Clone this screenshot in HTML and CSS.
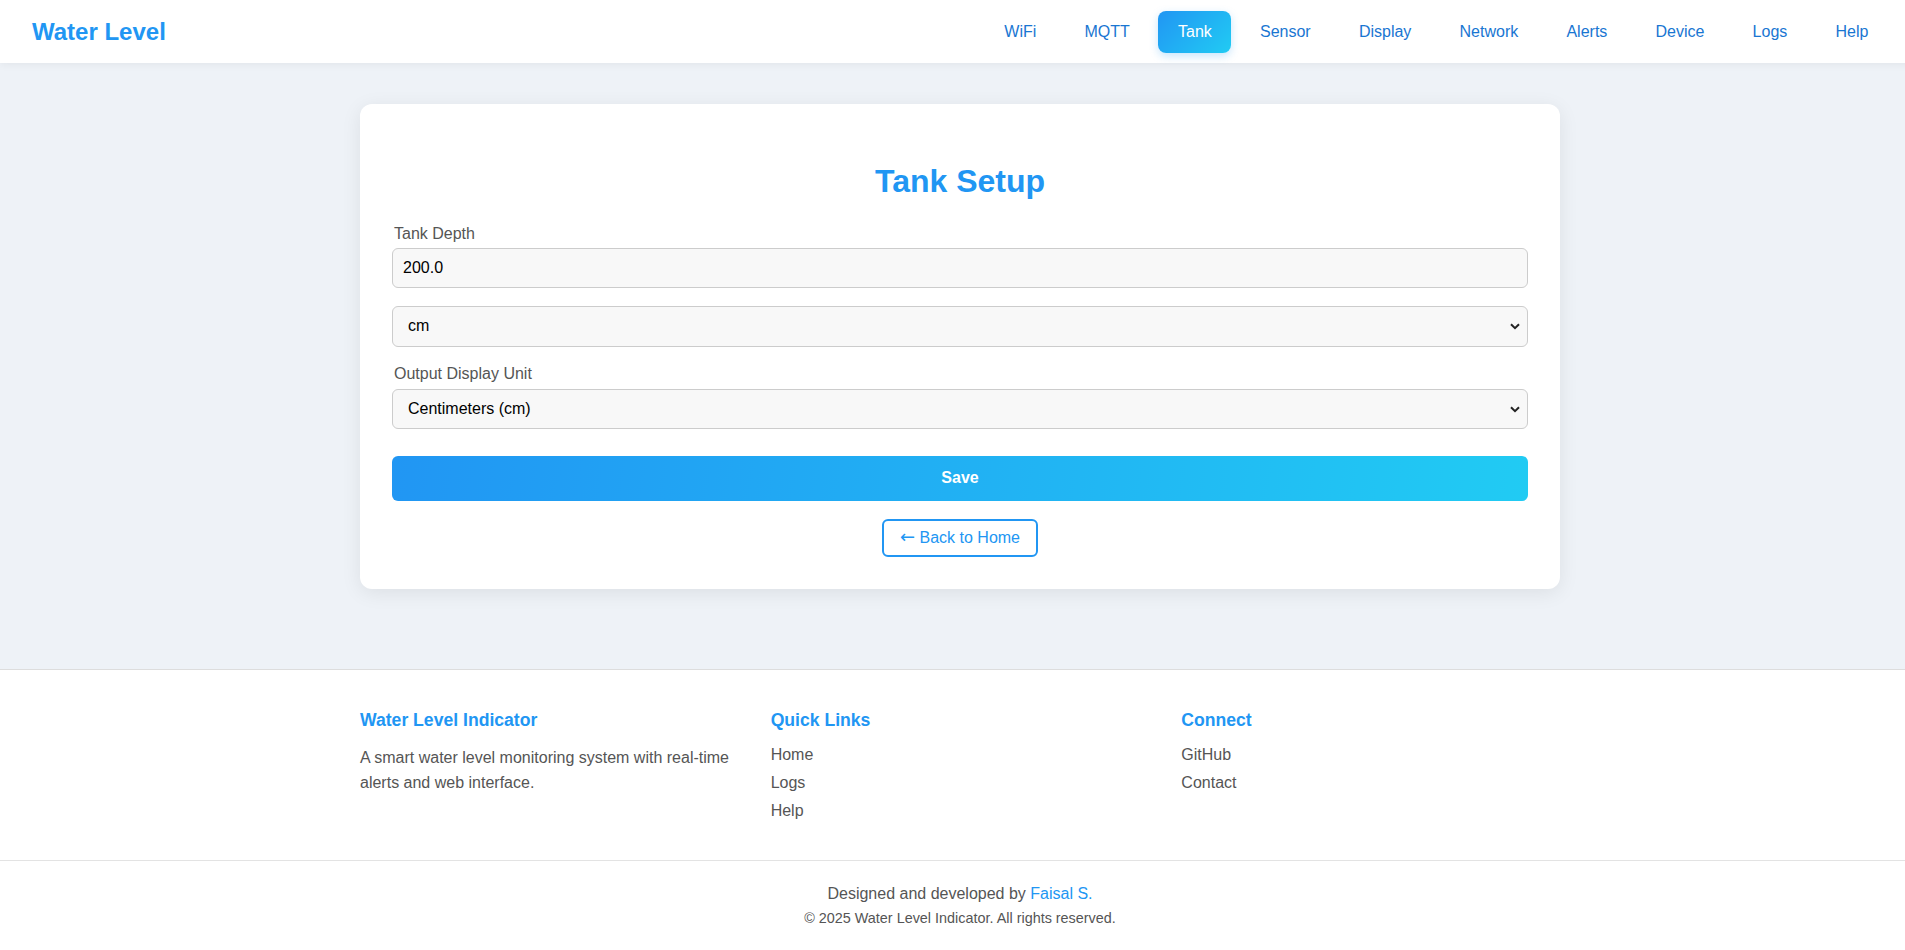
FILE: index.html
```html
<!DOCTYPE html>
<html lang="en">
<head>
<meta charset="utf-8">
<title>Tank Setup - Water Level</title>
<link rel="stylesheet" href="styles.css">
</head>
<body>
<div class="page">
  <header class="topbar">
    <a class="brand" href="#">Water Level</a>
    <nav>
      <ul class="nav">
        <li><a href="#">WiFi</a></li>
        <li><a href="#">MQTT</a></li>
        <li><a href="#" class="active">Tank</a></li>
        <li><a href="#">Sensor</a></li>
        <li><a href="#">Display</a></li>
        <li><a href="#">Network</a></li>
        <li><a href="#">Alerts</a></li>
        <li><a href="#">Device</a></li>
        <li><a href="#">Logs</a></li>
        <li><a href="#">Help</a></li>
      </ul>
    </nav>
  </header>

  <main class="main">
    <section class="card">
      <h2 class="card-title">Tank Setup</h2>
      <form class="form">
        <div class="field">
          <label class="label" for="depth">Tank Depth</label>
          <input class="control" id="depth" type="text" value="200.0">
        </div>
        <div class="field">
          <div class="select-wrap">
            <select class="control select">
              <option>cm</option>
            </select>
            <svg class="chevron" width="10" height="7" viewBox="0 0 10 7"><path d="M1 1.2 L5 5.2 L9 1.2" fill="none" stroke="#222" stroke-width="2"/></svg>
          </div>
        </div>
        <div class="field">
          <label class="label" for="unit">Output Display Unit</label>
          <div class="select-wrap">
            <select class="control select" id="unit">
              <option>Centimeters (cm)</option>
            </select>
            <svg class="chevron" width="10" height="7" viewBox="0 0 10 7"><path d="M1 1.2 L5 5.2 L9 1.2" fill="none" stroke="#222" stroke-width="2"/></svg>
          </div>
        </div>
        <button type="button" class="btn-save">Save</button>
      </form>
      <div class="back-row">
        <a class="btn-back" href="#"><span class="arrow">&larr;</span> Back to Home</a>
      </div>
    </section>
  </main>

  <footer class="footer">
    <div class="footer-grid">
      <div class="footer-col">
        <h3 class="footer-title">Water Level Indicator</h3>
        <p class="footer-text">A smart water level monitoring system with real-time alerts and web interface.</p>
      </div>
      <div class="footer-col">
        <h3 class="footer-title">Quick Links</h3>
        <ul class="footer-links">
          <li><a href="#">Home</a></li>
          <li><a href="#">Logs</a></li>
          <li><a href="#">Help</a></li>
        </ul>
      </div>
      <div class="footer-col">
        <h3 class="footer-title">Connect</h3>
        <ul class="footer-links">
          <li><a href="#">GitHub</a></li>
          <li><a href="#">Contact</a></li>
        </ul>
      </div>
    </div>
    <div class="footer-bottom">
      <p class="credit">Designed and developed by <a href="#">Faisal S.</a></p>
      <p class="copy">&copy; 2025 Water Level Indicator. All rights reserved.</p>
    </div>
  </footer>
</div>
</body>
</html>
```

FILE: styles.css
```css
* { box-sizing: border-box; }

html, body {
  margin: 0;
  padding: 0;
  overflow-x: hidden;
}

body {
  font-family: "Liberation Sans", Arial, Helvetica, sans-serif;
  background: #eef2f7;
  color: #333;
}

.page {
  width: 1920px;
}

a { text-decoration: none; }

/* Header */
.topbar {
  height: 63px;
  background: #ffffff;
  display: flex;
  align-items: center;
  justify-content: space-between;
  padding: 0 32px;
  box-shadow: 0 2px 8px rgba(0, 0, 0, 0.05);
  position: relative;
  z-index: 1;
}

.brand {
  font-size: 24px;
  font-weight: bold;
  color: #2196f3;
  line-height: 28px;
}

.nav {
  list-style: none;
  margin: 0;
  padding: 0;
  display: flex;
  gap: 9px;
}

.nav a {
  display: block;
  padding: 12px 19.6px;
  line-height: 18px;
  font-size: 16px;
  color: #1976d2;
  border-radius: 8px;
}

.nav a.active {
  background: linear-gradient(135deg, #2196f3, #21cbf3);
  color: #ffffff;
  box-shadow: 0 3px 8px rgba(33, 150, 243, 0.25);
}

/* Main */
.main {
  padding: 41px 0 80px;
}

.card {
  width: 1200px;
  margin: 0 auto;
  background: #ffffff;
  border-radius: 12px;
  padding: 32px;
  box-shadow: 0 4px 20px rgba(0, 0, 0, 0.08);
}

.card-title {
  text-align: center;
  color: #2196f3;
  font-size: 32px;
  font-weight: bold;
  line-height: 37px;
  margin: 26.5px 0 25px;
}

.form {
  display: flex;
  flex-direction: column;
}

.field {
  margin-bottom: 18px;
}

.label {
  display: block;
  font-size: 16px;
  line-height: 18px;
  color: #555;
  margin: 0 0 5px 2px;
}

.field:nth-child(3) .label {
  margin-bottom: 6px;
}

.control {
  display: block;
  width: 100%;
  height: 40px;
  padding: 10px;
  font-family: inherit;
  font-size: 16px;
  line-height: 18px;
  color: #000;
  background: #f8f8f8;
  border: 1px solid #cccccc;
  border-radius: 6px;
}

.select-wrap {
  position: relative;
}

.select {
  -webkit-appearance: none;
  appearance: none;
  height: 41px;
  padding: 10px 30px 10px 15px;
}

.field:nth-child(3) .select {
  height: 40px;
}

.chevron {
  position: absolute;
  right: 8px;
  top: 50%;
  margin-top: -3px;
  pointer-events: none;
}

.btn-save {
  margin-top: 9px;
  width: 100%;
  height: 45px;
  border: none;
  border-radius: 6px;
  background: linear-gradient(100deg, #2196f3, #21cbf3);
  color: #ffffff;
  font-family: inherit;
  font-size: 16px;
  font-weight: bold;
}

.back-row {
  text-align: center;
  margin-top: 18px;
  line-height: 0;
}

.btn-back {
  display: inline-block;
  height: 38px;
  padding: 8px 16px;
  line-height: 18px;
  font-size: 16px;
  color: #2196f3;
  border: 2px solid #2196f3;
  border-radius: 6px;
}

.arrow {
  font-family: "DejaVu Sans", sans-serif;
  font-size: 18px;
  font-weight: normal;
  line-height: 0;
}

/* Footer */
.footer {
  background: #ffffff;
  border-top: 1px solid #dddddd;
}

.footer-grid {
  width: 1200px;
  margin: 0 auto;
  padding: 40px 0 39px;
  display: grid;
  grid-template-columns: repeat(3, 1fr);
  gap: 32px;
}

.footer-title {
  margin: 0 0 15px;
  font-size: 17.6px;
  line-height: 20px;
  font-weight: bold;
  color: #2196f3;
}

.footer-text {
  margin: 0;
  font-size: 16px;
  line-height: 25.6px;
  color: #555;
}

.footer-links {
  list-style: none;
  margin: 0;
  padding: 0;
}

.footer-links li {
  line-height: 20px;
  margin-bottom: 8px;
}

.footer-links li:last-child {
  margin-bottom: 0;
}

.footer-links a {
  font-size: 16px;
  color: #555;
}

.footer-bottom {
  border-top: 1px solid #e3e3e3;
  padding: 24px 0 24px;
  text-align: center;
}

.credit {
  margin: 0 0 7px;
  font-size: 16px;
  line-height: 18px;
  color: #555;
}

.credit a {
  color: #2196f3;
}

.copy {
  margin: 0;
  font-size: 14.4px;
  line-height: 16px;
  color: #555;
}
```
